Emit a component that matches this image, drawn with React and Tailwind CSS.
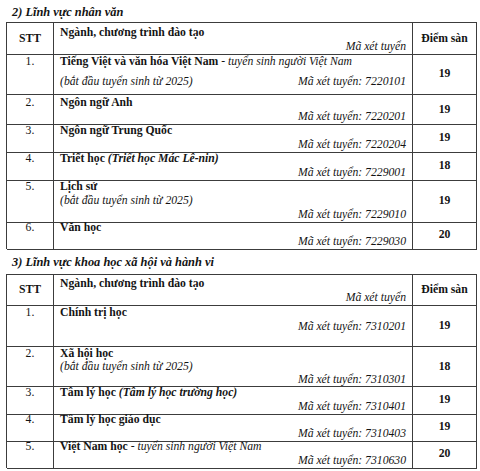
import React from 'react';

const table1 = [
  {
    stt: '1.', score: '19', h: 'h-[41px]', pt: 'pt-[1px]',
    name: (
      <>
        <b>Tiếng Việt và văn hóa Việt Nam</b> - <i>tuyển sinh người Việt Nam</i>
      </>
    ),
    note: '(bắt đầu tuyển sinh từ 2025)', noteInline: true, code: '7220101', codeMt: 'mt-[6px]',
  },
  { stt: '2.', score: '19', h: 'h-[28px]', pt: 'pt-[1px]', name: <b>Ngôn ngữ Anh</b>, code: '7220201' },
  { stt: '3.', score: '19', h: 'h-[29px]', pt: 'pt-[1px]', name: <b>Ngôn ngữ Trung Quốc</b>, code: '7220204' },
  {
    stt: '4.', score: '18', h: 'h-[28px]', pt: 'pt-0',
    name: (
      <>
        <b>Triết học</b> <b className="italic">(Triết học Mác Lê-nin)</b>
      </>
    ),
    code: '7229001',
  },
  {
    stt: '5.', score: '19', h: 'h-[41px]', pt: 'pt-0', name: <b>Lịch sử</b>,
    note: '(bắt đầu tuyển sinh từ 2025)', code: '7229010',
  },
  { stt: '6.', score: '20', h: 'h-[28px]', pt: 'pt-0', name: <b>Văn học</b>, code: '7229030' },
];

const table2 = [
  { stt: '1.', score: '19', h: 'h-[41px]', pt: 'pt-0', name: <b>Chính trị học</b>, code: '7310201' },
  {
    stt: '2.', score: '18', h: 'h-[38px]', pt: 'pt-0', lead: 'leading-[13px]', name: <b>Xã hội học</b>,
    note: '(bắt đầu tuyển sinh từ 2025)', code: '7310301',
  },
  {
    stt: '3.', score: '19', h: 'h-[27px]', pt: 'pt-[1px]',
    name: (
      <>
        <b>Tâm lý học</b> <b className="italic">(Tâm lý học trường học)</b>
      </>
    ),
    code: '7310401',
  },
  { stt: '4.', score: '19', h: 'h-[28px]', pt: 'pt-[1px]', name: <b>Tâm lý học giáo dục</b>, code: '7310403' },
  {
    stt: '5.', score: '20', h: 'h-[28px]', pt: 'pt-0',
    name: (
      <>
        <b>Việt Nam học</b> - <i>tuyển sinh người Việt Nam</i>
      </>
    ),
    code: '7310630',
  },
];

const cell = 'border-r border-b border-[#3c3c3c]';

const Header = ({ pt }) => (
  <div className="grid grid-cols-[47px_359px_64px] h-[31px]">
    <div className={`${cell} flex items-center justify-center font-bold`}>STT</div>
    <div className={`${cell} px-[6px] ${pt}`}>
      <div className="font-bold">Ngành, chương trình đào tạo</div>
      <div className="text-right italic">Mã xét tuyển</div>
    </div>
    <div className={`${cell} flex items-center justify-center font-bold`}>Điểm sàn</div>
  </div>
);

const Row = ({ row }) => (
  <div className={`grid grid-cols-[47px_359px_64px] ${row.h} ${row.lead || ''}`}>
    <div className={`${cell} text-center ${row.pt}`}>{row.stt}</div>
    <div className={`${cell} px-[6px] ${row.pt}`}>
      <div>{row.name}</div>
      {row.note && !row.noteInline && <div className="italic">{row.note}</div>}
      <div className={`flex justify-between ${row.codeMt || ''}`}>
        <span className="italic">{row.noteInline ? row.note : ''}</span>
        <span className="italic">Mã xét tuyển: {row.code}</span>
      </div>
    </div>
    <div className={`${cell} flex items-center justify-center font-bold`}>{row.score}</div>
  </div>
);

const Section = ({ title, rows, titleCls, headPt }) => (
  <div>
    <div className={`font-bold italic text-[12.4px] pl-[12px] ${titleCls}`}>{title}</div>
    <div className="ml-[6px] w-[471px] border-l border-t border-[#3c3c3c]">
      <Header pt={headPt} />
      {rows.map((r) => (
        <Row key={r.stt} row={r} />
      ))}
    </div>
  </div>
);

export default function App() {
  return (
    <div className="w-[480px] h-[471px] bg-white text-[#141414] text-[11.7px] leading-[14px] overflow-hidden font-['Liberation_Serif','Times_New_Roman',serif]">
      <Section
        title="2) Lĩnh vực nhân văn"
        rows={table1}
        titleCls="pt-[5px] pb-[3px]"
        headPt="pt-[3px]"
      />
      <Section
        title="3) Lĩnh vực khoa học xã hội và hành vi"
        rows={table2}
        titleCls="pt-[6px] pb-[5px]"
        headPt="pt-[2px]"
      />
    </div>
  );
}
